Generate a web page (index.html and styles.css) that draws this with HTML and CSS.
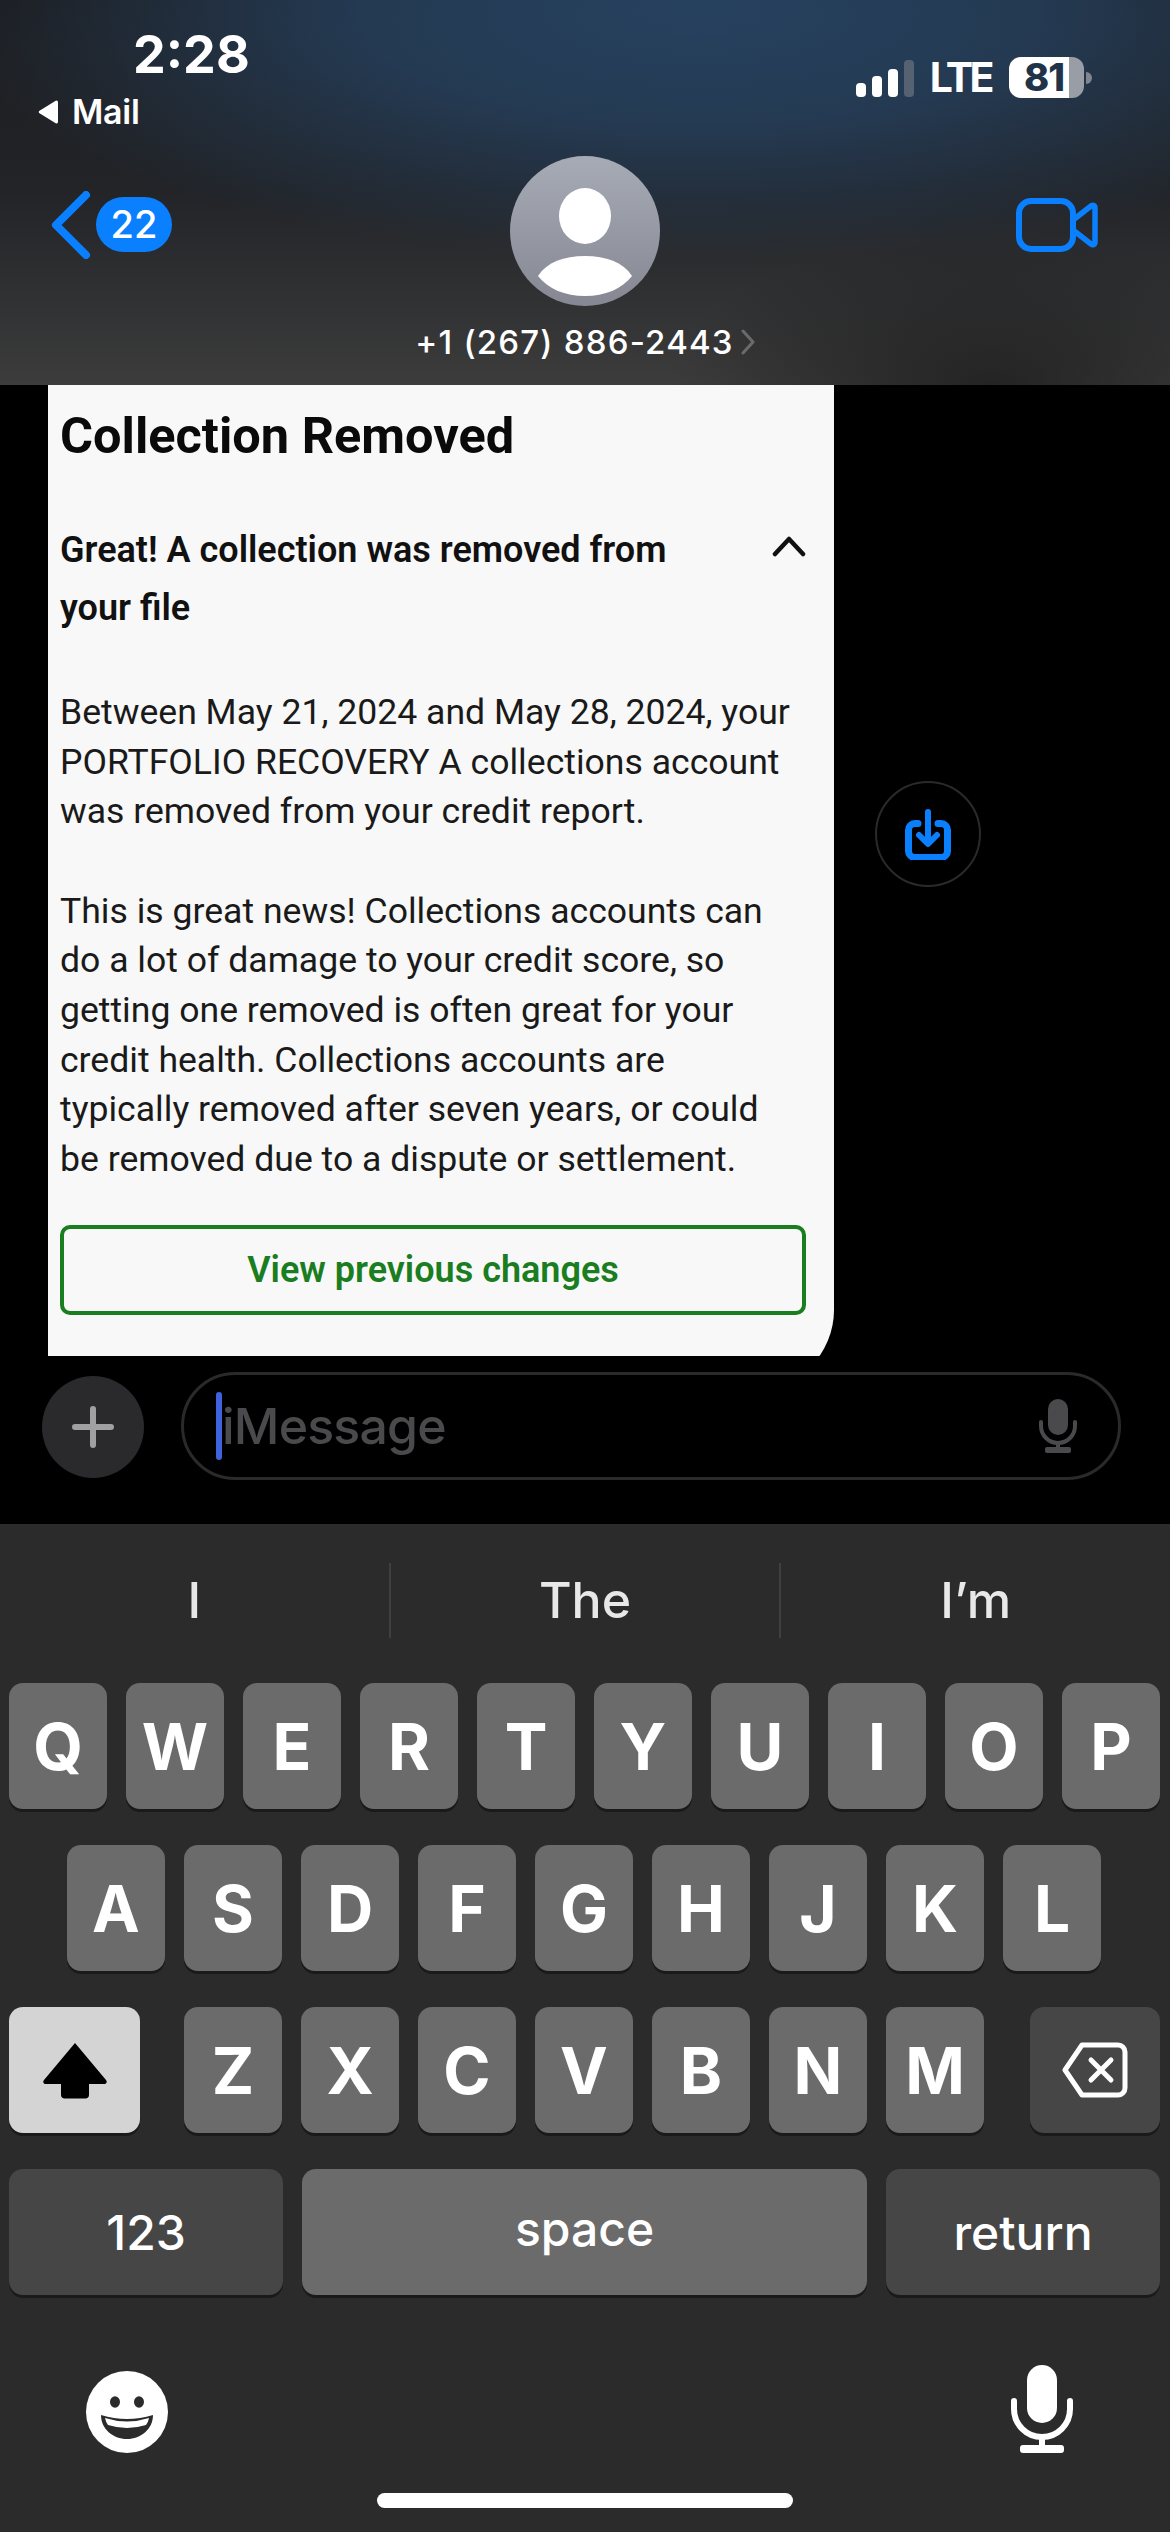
FILE: index.html
```html
<!DOCTYPE html>
<html lang="en">
<head>
    <meta charset="UTF-8">
    <meta name="viewport" content="width=device-width, initial-scale=1.0">
    <title>iMessage</title>
    <link rel="stylesheet" href="styles.css">
</head>
<body>
    <header class="top">
        <div class="status-bar">
            <div class="status-left">
                <div class="time">2:28</div>
                <div class="back-app">
                    <svg width="22" height="24" viewBox="0 0 22 24"><path d="M20 2v20a1.5 1.5 0 0 1-2.300 1.200L1.500 13.300a1.500 1.500 0 0 1 0-2.600L17.700.8A1.500 1.500 0 0 1 20 2z" fill="#fff"/></svg>
                    <span>Mail</span>
                </div>
            </div>
            <div class="status-right">
                <svg width="58" height="37" viewBox="0 0 58 37">
                    <rect x="0" y="23" width="10" height="14" rx="4" fill="#fff"/>
                    <rect x="16" y="16" width="10" height="21" rx="4" fill="#fff"/>
                    <rect x="32" y="9" width="10" height="28" rx="4" fill="#fff"/>
                    <rect x="48" y="0" width="10" height="37" rx="4" fill="#566272"/>
                </svg>
                <span class="lte">LTE</span>
                <div class="battery">
                    <div class="battery-body"><span>81</span></div>
                    <div class="battery-nub"></div>
                </div>
            </div>
        </div>
        <nav class="contact-bar">
            <div class="back">
                <svg width="42" height="68" viewBox="0 0 42 68"><path d="M36 4L6 34l30 30" fill="none" stroke="#0a80ff" stroke-width="8" stroke-linecap="round" stroke-linejoin="round"/></svg>
                <span class="badge">22</span>
            </div>
            <div class="contact">
                <div class="avatar">
                    <svg width="150" height="150" viewBox="0 0 150 150">
                        <defs><linearGradient id="av" x1="0" y1="0" x2="0" y2="1"><stop offset="0" stop-color="#a7abb6"/><stop offset="1" stop-color="#858893"/></linearGradient></defs>
                        <circle cx="75" cy="75" r="75" fill="url(#av)"/>
                        <ellipse cx="75" cy="60" rx="26" ry="28" fill="#fff"/>
                        <path d="M28 120c9-14 26-20 47-20s38 6 47 20c-10 13-27 20-47 20s-37-7-47-20z" fill="#fff"/>
                    </svg>
                </div>
                <div class="phone">
                    <span>+1 (267) 886-2443</span>
                    <svg width="14" height="28" viewBox="0 0 14 28"><path d="M2 3l10 11L2 25" fill="none" stroke="#6b6b6b" stroke-width="3" stroke-linecap="round" stroke-linejoin="round"/></svg>
                </div>
            </div>
            <div class="video">
                <svg width="82" height="56" viewBox="0 0 82 56">
                    <rect x="3" y="4" width="54" height="48" rx="12" fill="none" stroke="#0a80ff" stroke-width="6"/>
                    <path d="M57 23L75 9c2-1.500 4-.5 4 2v34c0 2.500-2 3.500-4 2L57 33z" fill="none" stroke="#0a80ff" stroke-width="5.500" stroke-linejoin="round"/>
                </svg>
            </div>
        </nav>
    </header>

    <main class="thread">
        <article class="card">
            <h2 class="card-title">Collection Removed</h2>
            <div class="accordion">
                <h3>Great! A collection was removed from<br>your file</h3>
                <svg width="34" height="22" viewBox="0 0 34 22"><path d="M3 19L17 4l14 15" fill="none" stroke="#111" stroke-width="4.500" stroke-linecap="round" stroke-linejoin="round"/></svg>
            </div>
            <p>Between May 21, 2024 and May 28, 2024, your<br>PORTFOLIO RECOVERY A collections account<br>was removed from your credit report.</p>
            <p>This is great news! Collections accounts can<br>do a lot of damage to your credit score, so<br>getting one removed is often great for your<br>credit health. Collections accounts are<br>typically removed after seven years, or could<br>be removed due to a dispute or settlement.</p>
            <div class="card-btn">View previous changes</div>
        </article>
        <div class="save-btn">
            <svg width="46" height="52" viewBox="0 0 46 52">
                <path d="M13 15.500h-3A6.500 6.500 0 0 0 3.500 22v21a6.500 6.500 0 0 0 6.500 6.500h26a6.500 6.500 0 0 0 6.500-6.500V22a6.500 6.500 0 0 0-6.500-6.500h-3" fill="none" stroke="#0a80ff" stroke-width="7" stroke-linecap="round"/>
                <path d="M23 4v31M14 27l9 9 9-9" fill="none" stroke="#0a80ff" stroke-width="6" stroke-linecap="round" stroke-linejoin="round"/>
            </svg>
        </div>
    </main>

    <section class="composer">
        <div class="plus">
            <svg width="42" height="42" viewBox="0 0 42 42"><path d="M21 3v36M3 21h36" stroke="#a0a0a2" stroke-width="6" stroke-linecap="round"/></svg>
        </div>
        <div class="input">
            <span class="caret"></span>
            <span class="placeholder">iMessage</span>
            <svg class="input-mic" width="40" height="54" viewBox="0 0 40 54">
                <rect x="10" y="0" width="20" height="36" rx="10" fill="#4a4a4c"/>
                <path d="M3 23v4a17 17 0 0 0 34 0v-4" fill="none" stroke="#4a4a4c" stroke-width="4" stroke-linecap="round"/>
                <path d="M20 44v5" stroke="#4a4a4c" stroke-width="4"/>
                <rect x="7" y="48" width="26" height="6" rx="2" fill="#4a4a4c"/>
            </svg>
        </div>
    </section>

    <section class="keyboard">
        <div class="suggestions">
            <div class="suggestion">I</div>
            <div class="suggestion">The</div>
            <div class="suggestion">I’m</div>
        </div>
        <div class="key-row">
            <div class="key">Q</div><div class="key">W</div><div class="key">E</div><div class="key">R</div><div class="key">T</div><div class="key">Y</div><div class="key">U</div><div class="key">I</div><div class="key">O</div><div class="key">P</div>
        </div>
        <div class="key-row row-home">
            <div class="key">A</div><div class="key">S</div><div class="key">D</div><div class="key">F</div><div class="key">G</div><div class="key">H</div><div class="key">J</div><div class="key">K</div><div class="key">L</div>
        </div>
        <div class="key-row">
            <div class="key key-shift">
                <svg width="66" height="58" viewBox="0 0 66 58"><path d="M33 2L64 39c1.500 2 .5 4-2 4H47v11c0 2-1.500 3.500-3.500 3.500h-21c-2 0-3.500-1.500-3.500-3.500V43H4c-2.500 0-3.500-2-2-4z" fill="#000"/></svg>
            </div>
            <div class="key key-z">Z</div><div class="key">X</div><div class="key">C</div><div class="key">V</div><div class="key">B</div><div class="key">N</div><div class="key">M</div>
            <div class="key key-dark key-delete">
                <svg width="66" height="56" viewBox="0 0 66 56">
                    <path d="M20 3h36a7 7 0 0 1 7 7v36a7 7 0 0 1-7 7H20L3 28z" fill="none" stroke="#fff" stroke-width="5" stroke-linejoin="round"/>
                    <path d="M29 18l20 20M49 18L29 38" stroke="#fff" stroke-width="5" stroke-linecap="round"/>
                </svg>
            </div>
        </div>
        <div class="key-row">
            <div class="key key-dark key-wide key-label">123</div>
            <div class="key key-space key-label"><span>space</span></div>
            <div class="key key-dark key-wide key-label">return</div>
        </div>
        <div class="keyboard-bottom">
            <svg width="82" height="82" viewBox="0 0 82 82">
                <circle cx="41" cy="41" r="41" fill="#fff"/>
                <ellipse cx="29" cy="31" rx="5" ry="5.700" fill="#2b2b2b"/>
                <ellipse cx="53" cy="31" rx="5" ry="5.700" fill="#2b2b2b"/>
                <path d="M15 44Q41 52 67 44C67 58 55 68 41 68S15 58 15 44z" fill="#2b2b2b"/>
                <path d="M19 47Q41 54 63 47Q62 52 60 54Q41 60 22 54Q20 52 19 47z" fill="#fff"/>
            </svg>
            <svg width="62" height="88" viewBox="0 0 62 88">
                <rect x="16" y="0" width="30" height="58" rx="15" fill="#fff"/>
                <path d="M3 36v8a28 28 0 0 0 56 0v-8" fill="none" stroke="#fff" stroke-width="6" stroke-linecap="round"/>
                <path d="M31 72v10" stroke="#fff" stroke-width="6"/>
                <rect x="9" y="80" width="44" height="8" rx="3" fill="#fff"/>
            </svg>
        </div>
        <div class="home-bar"></div>
    </section>
</body>
</html>
```

FILE: styles.css
```css
* {
    margin: 0;
    padding: 0;
    box-sizing: border-box;
}

body {
    width: 1170px;
    height: 2532px;
    display: flex;
    flex-direction: column;
    overflow: hidden;
    background: #000;
    color: #fff;
    font-family: Inter, "Liberation Sans", sans-serif;
}

svg {
    display: block;
    flex-shrink: 0;
}

/* header */
.top {
    height: 385px;
    padding: 35px 38px 0;
    background:
        radial-gradient(ellipse 320px 150px at 990px 385px, rgba(28, 28, 28, 0.75), rgba(28, 28, 28, 0)),
        radial-gradient(ellipse 760px 250px at 700px 10px, #26415f 0%, rgba(38, 65, 95, 0.8) 45%, rgba(38, 65, 95, 0) 100%),
        linear-gradient(180deg, #1c1c1e 0%, #222428 50%, #3c3c3c 100%);
}

.status-bar {
    height: 96px;
    display: flex;
    justify-content: space-between;
}

.time {
    margin-left: 95px;
    font-size: 52px;
    line-height: 40px;
    font-weight: 700;
}

.back-app {
    margin-top: 23px;
    display: flex;
    align-items: center;
    gap: 12px;
    font-size: 34px;
    line-height: 28px;
    font-weight: 600;
    letter-spacing: -0.3px;
}

.status-right {
    display: flex;
    align-items: center;
    height: 41px;
    margin: 22px 40px 0 0;
    gap: 16px;
}

.status-right > svg {
    margin-top: 1px;
}

.lte {
    font-size: 41px;
    font-weight: 700;
    line-height: 41px;
    letter-spacing: -3.5px;
    margin-right: 2px;
}

.battery {
    display: flex;
    align-items: center;
    gap: 2px;
}

.battery-body {
    width: 75px;
    height: 41px;
    padding-left: 15px;
    border-radius: 12px;
    background: linear-gradient(90deg, #fff 0 80%, #999da5 80% 100%);
    color: #203349;
    font-size: 38px;
    font-weight: 800;
    line-height: 41px;
    letter-spacing: -1px;
}

.battery-nub {
    width: 6px;
    height: 12px;
    border-radius: 0 6px 6px 0;
    background: #808690;
}

.contact-bar {
    display: grid;
    grid-template-columns: 1fr 150px 1fr;
    margin-top: 25px;
}

.back {
    display: flex;
    align-items: flex-start;
    gap: 4px;
    margin-left: 12px;
    padding-top: 35px;
}

.badge {
    width: 76px;
    height: 55px;
    margin-top: 6px;
    border-radius: 28px;
    background: #0a80ff;
    font-size: 38px;
    font-weight: 500;
    line-height: 55px;
    text-align: center;
}

.contact {
    display: flex;
    flex-direction: column;
    align-items: center;
}

.phone {
    margin-top: 14px;
    display: flex;
    align-items: center;
    gap: 7px;
    white-space: nowrap;
    font-size: 33px;
    line-height: 44px;
    font-weight: 500;
    letter-spacing: 1.2px;
}

.video {
    display: flex;
    justify-content: flex-end;
    padding: 41px 34px 0 0;
}

/* message thread */
.thread {
    height: 971px;
    padding-left: 48px;
    display: flex;
    align-items: flex-start;
    overflow: hidden;
}

.card {
    flex-shrink: 0;
    width: 786px;
    height: 1005px;
    padding: 26px 28px 0 12px;
    border-radius: 0 0 80px 0;
    background: #f8f8f8;
    color: #1a1a1a;
    font-family: Roboto, "Noto Sans", sans-serif;
    font-size: 35.6px;
    line-height: 49.6px;
}

.card-title {
    font-size: 50.5px;
    line-height: 50px;
    font-weight: 700;
    color: #0a0a0a;
}

.accordion {
    margin-top: 60px;
    display: flex;
    justify-content: space-between;
}

.accordion h3 {
    font-size: 36px;
    line-height: 58px;
    font-weight: 600;
    color: #111;
}

.accordion svg {
    margin-top: 14px;
}

.card p {
    margin-top: 51px;
    white-space: nowrap;
}

.card p + p {
    margin-top: 50px;
}

.card-btn {
    margin-top: 41px;
    width: 746px;
    height: 90px;
    border: 4px solid #1a7d1f;
    border-radius: 10px;
    color: #1a7d1f;
    font-size: 36px;
    font-weight: 600;
    line-height: 82px;
    text-align: center;
}

.save-btn {
    width: 106px;
    height: 106px;
    margin: 396px 0 0 41px;
    border: 2px solid #2a2a2c;
    border-radius: 50%;
    display: flex;
    align-items: center;
    justify-content: center;
}

/* composer */
.composer {
    height: 168px;
    padding: 16px 49px 0 42px;
    display: flex;
    align-items: flex-start;
    gap: 37px;
}

.plus {
    width: 102px;
    height: 102px;
    margin-top: 4px;
    border-radius: 50%;
    background: #2a2a2c;
    display: flex;
    align-items: center;
    justify-content: center;
}

.input {
    flex: 1;
    height: 108px;
    padding: 0 40px 0 32px;
    border: 3px solid #2a2a2c;
    border-radius: 54px;
    display: flex;
    align-items: center;
}

.caret {
    width: 6px;
    height: 68px;
    border-radius: 3px;
    background: #3e63dd;
}

.placeholder {
    flex: 1;
    color: #4a4a4c;
    font-size: 50px;
    font-weight: 500;
    letter-spacing: -0.8px;
}

/* keyboard */
.keyboard {
    flex: 1;
    background: #2b2b2b;
    display: flex;
    flex-direction: column;
}

.suggestions {
    height: 159px;
    padding: 39px 0 45px;
    display: flex;
}

.suggestion {
    flex: 1;
    font-size: 50px;
    font-weight: 500;
    line-height: 75px;
    text-align: center;
    color: #e8e8e8;
}

.suggestion + .suggestion {
    border-left: 2px solid #404040;
}

.key-row {
    padding: 0 10px 0 9px;
    margin-bottom: 36px;
    display: flex;
    gap: 19px;
}

.row-home {
    padding-left: 67px;
}

.key {
    width: 98px;
    height: 126px;
    border-radius: 14px;
    background: #6b6b6b;
    box-shadow: 0 3px 0 #1a1a1a;
    display: flex;
    align-items: center;
    justify-content: center;
    font-size: 64px;
    font-weight: 700;
}

.key-shift {
    width: 131px;
    background: #d4d4d4;
}

.key-z {
    margin-left: 25px;
}

.key-dark {
    background: #464646;
}

.key-delete {
    width: 130px;
    margin-left: 27px;
}

.key-wide {
    width: 274px;
}

.key-space {
    flex: 1;
}

.key-space span {
    margin-bottom: 7px;
}

.key-label {
    font-size: 48px;
    font-weight: 500;
}

.keyboard-bottom {
    padding: 34px 97px 0 86px;
    display: flex;
    justify-content: space-between;
    align-items: flex-end;
}

.home-bar {
    width: 416px;
    height: 15px;
    margin: 40px auto 0;
    border-radius: 8px;
    background: #fff;
}
```
